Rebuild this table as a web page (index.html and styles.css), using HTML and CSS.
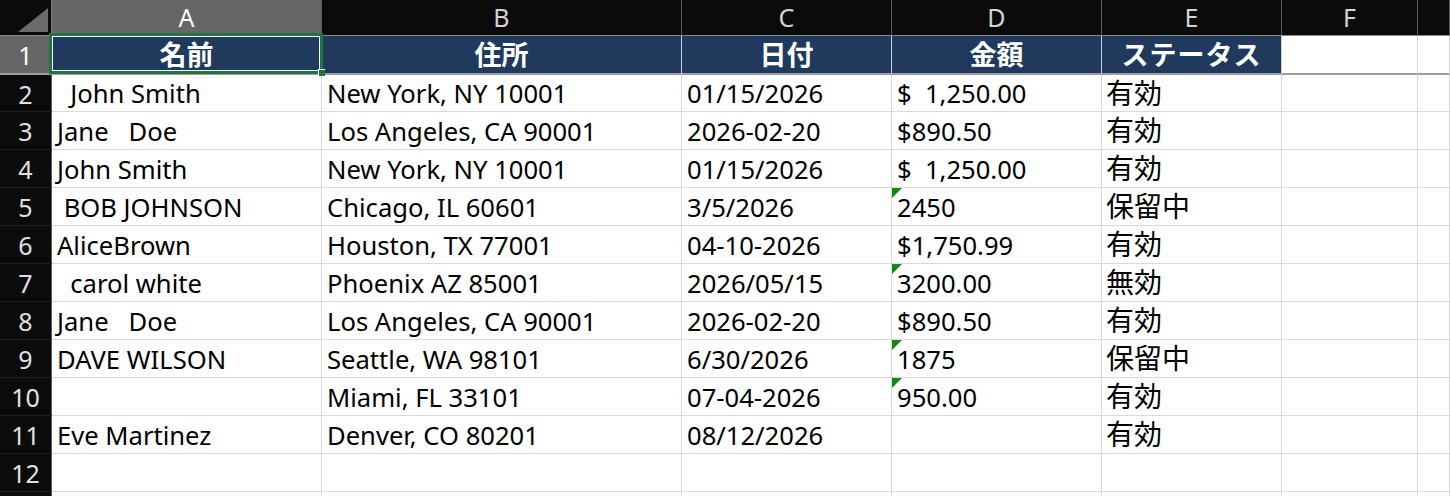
FILE: index.html
```html
<!DOCTYPE html>
<html lang="ja">
<head>
<meta charset="utf-8">
<title>Sheet</title>
<link rel="stylesheet" href="styles.css">
</head>
<body>
<div class="sheet">
  <div class="cell corner"><svg class="tri" width="51" height="35" viewBox="0 0 51 35"><polygon points="18,32 48,32 48,8" fill="#6b6b6b"/></svg></div>
  <div class="cell ch sel">A</div>
  <div class="cell ch">B</div>
  <div class="cell ch">C</div>
  <div class="cell ch">D</div>
  <div class="cell ch">E</div>
  <div class="cell ch">F</div>
  <div class="cell ch"></div>

  <div class="cell rh sel r1">1</div>
  <div class="cell hd r1 active">名前<div class="selection"><span class="handle"></span></div></div>
  <div class="cell hd r1">住所</div>
  <div class="cell hd r1">日付</div>
  <div class="cell hd r1">金額</div>
  <div class="cell hd r1 kana">ステータス</div>
  <div class="cell r1"></div>
  <div class="cell r1"></div>

  <div class="cell rh r2">2</div>
  <div class="cell r2">  John Smith</div>
  <div class="cell r2">New York, NY 10001</div>
  <div class="cell r2">01/15/2026</div>
  <div class="cell r2">$  1,250.00</div>
  <div class="cell r2 st">有効</div>
  <div class="cell r2"></div>
  <div class="cell r2"></div>

  <div class="cell rh">3</div>
  <div class="cell">Jane   Doe</div>
  <div class="cell">Los Angeles, CA 90001</div>
  <div class="cell">2026-02-20</div>
  <div class="cell">$890.50</div>
  <div class="cell st">有効</div>
  <div class="cell"></div>
  <div class="cell"></div>

  <div class="cell rh">4</div>
  <div class="cell">John Smith</div>
  <div class="cell">New York, NY 10001</div>
  <div class="cell">01/15/2026</div>
  <div class="cell">$  1,250.00</div>
  <div class="cell st">有効</div>
  <div class="cell"></div>
  <div class="cell"></div>

  <div class="cell rh">5</div>
  <div class="cell"> BOB JOHNSON</div>
  <div class="cell">Chicago, IL 60601</div>
  <div class="cell">3/5/2026</div>
  <div class="cell warn">2450</div>
  <div class="cell st">保留中</div>
  <div class="cell"></div>
  <div class="cell"></div>

  <div class="cell rh">6</div>
  <div class="cell">AliceBrown</div>
  <div class="cell">Houston, TX 77001</div>
  <div class="cell">04-10-2026</div>
  <div class="cell">$1,750.99</div>
  <div class="cell st">有効</div>
  <div class="cell"></div>
  <div class="cell"></div>

  <div class="cell rh">7</div>
  <div class="cell">  carol white</div>
  <div class="cell">Phoenix AZ 85001</div>
  <div class="cell">2026/05/15</div>
  <div class="cell warn">3200.00</div>
  <div class="cell st">無効</div>
  <div class="cell"></div>
  <div class="cell"></div>

  <div class="cell rh">8</div>
  <div class="cell">Jane   Doe</div>
  <div class="cell">Los Angeles, CA 90001</div>
  <div class="cell">2026-02-20</div>
  <div class="cell">$890.50</div>
  <div class="cell st">有効</div>
  <div class="cell"></div>
  <div class="cell"></div>

  <div class="cell rh">9</div>
  <div class="cell">DAVE WILSON</div>
  <div class="cell">Seattle, WA 98101</div>
  <div class="cell">6/30/2026</div>
  <div class="cell warn">1875</div>
  <div class="cell st">保留中</div>
  <div class="cell"></div>
  <div class="cell"></div>

  <div class="cell rh">10</div>
  <div class="cell"></div>
  <div class="cell">Miami, FL 33101</div>
  <div class="cell">07-04-2026</div>
  <div class="cell warn">950.00</div>
  <div class="cell st">有効</div>
  <div class="cell"></div>
  <div class="cell"></div>

  <div class="cell rh">11</div>
  <div class="cell">Eve Martinez</div>
  <div class="cell">Denver, CO 80201</div>
  <div class="cell">08/12/2026</div>
  <div class="cell"></div>
  <div class="cell st">有効</div>
  <div class="cell"></div>
  <div class="cell"></div>

  <div class="cell rh">12</div>
  <div class="cell"></div>
  <div class="cell"></div>
  <div class="cell"></div>
  <div class="cell"></div>
  <div class="cell"></div>
  <div class="cell"></div>
  <div class="cell"></div>

  <div class="cell rh"></div>
  <div class="cell"></div>
  <div class="cell"></div>
  <div class="cell"></div>
  <div class="cell"></div>
  <div class="cell"></div>
  <div class="cell"></div>
  <div class="cell"></div>
</div>
</body>
</html>
```

FILE: styles.css
```css
html, body {
  margin: 0;
  padding: 0;
  background: #ffffff;
  overflow: hidden;
}

body {
  font-family: "Noto Sans", "Noto Sans CJK JP", sans-serif;
}

.sheet {
  display: grid;
  grid-template-columns: 52px 270px 360px 210px 210px 180px 136px 1fr;
  grid-template-rows: 36px 39px 37px repeat(11, 38px);
  width: 1450px;
  height: 496px;
  overflow: hidden;
}

.cell {
  box-sizing: border-box;
  position: relative;
  border-right: 1px solid #d9d9d9;
  border-bottom: 1px solid #d9d9d9;
  font-size: 25.6px;
  line-height: 37px;
  padding-left: 5px;
  padding-top: 1px;
  white-space: pre;
  overflow: hidden;
  color: #000000;
}

.corner {
  background: #0b0b0b;
  border-right: 1px solid #7a7a7a;
  border-bottom: 1px solid #8a8a8a;
  padding: 0;
}

.tri {
  display: block;
}

.ch {
  background: #0b0b0b;
  color: #d4d4d4;
  text-align: center;
  font-size: 25px;
  line-height: 35px;
  padding: 0;
  border-right-color: #5c5c5c;
  border-bottom-color: #8a8a8a;
}

.ch.sel {
  background: #666666;
  color: #ffffff;
}

.rh {
  background: #0b0b0b;
  color: #e0e0e0;
  text-align: center;
  font-size: 25px;
  padding-left: 0;
  border-right-color: #5a5a5a;
  border-bottom-color: #1e1e1e;
}

.rh.sel {
  background: #666666;
  color: #ffffff;
}

.r1 {
  border-bottom: 2px solid #9e9e9e;
}

.r2 {
  line-height: 36px;
}

.hd {
  background: #1f3a5d;
  color: #ffffff;
  font-weight: 700;
  font-size: 27px;
  text-align: center;
  padding: 0;
  border-right-color: #c9d0d8;
}

.kana {
  letter-spacing: 1px;
}

.active {
  overflow: visible;
  z-index: 2;
}

.selection {
  position: absolute;
  left: -3px;
  top: -3px;
  right: -2px;
  bottom: -1px;
  border: 3px solid #217346;
  box-shadow: inset 0 0 0 1px #ffffff;
  pointer-events: none;
}

.handle {
  position: absolute;
  right: -5px;
  bottom: -5px;
  width: 7px;
  height: 7px;
  background: #217346;
  border-left: 1px solid #ffffff;
  border-top: 1px solid #ffffff;
  box-sizing: border-box;
}

.st {
  font-size: 28px;
  padding-left: 4px;
  padding-top: 0;
}

.warn::before {
  content: "";
  position: absolute;
  top: 0;
  left: 0;
  width: 10px;
  height: 10px;
  background: #118a11;
  clip-path: polygon(0 0, 100% 0, 0 100%);
}
```
